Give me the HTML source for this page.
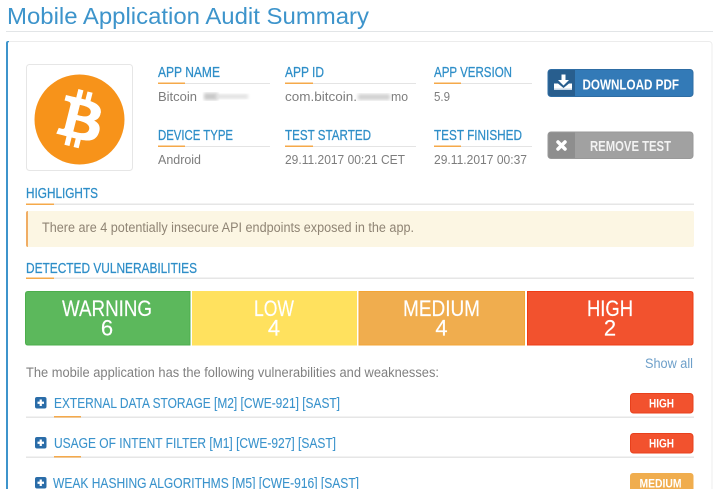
<!DOCTYPE html>
<html><head><meta charset="utf-8"><style>
html,body{margin:0;padding:0;background:#fff;width:720px;height:489px;overflow:hidden}
svg{display:block;filter:blur(.35px)}
text{font-family:"Liberation Sans",sans-serif}
.l{font-size:14.5px;fill:#2e8ec8;stroke:#2e8ec8;stroke-width:.25px}
.v{font-size:13px;fill:#7d7d7d}
.r{font-size:14.5px;fill:#3a93cc;stroke:#3a93cc;stroke-width:.1px}
.c{font-size:22px;fill:#fff;stroke:#fff;stroke-width:.15px}
.bg{font-size:12px;font-weight:bold;fill:#fff}
</style></head><body>
<svg width="720" height="489" viewBox="0 0 720 489" xmlns="http://www.w3.org/2000/svg">
<defs><filter id="b"><feGaussianBlur stdDeviation="1.5"/></filter></defs>
<text x="7" y="24" font-size="23" fill="#3d94cb" textLength="362" lengthAdjust="spacingAndGlyphs">Mobile Application Audit Summary</text>
<rect x="6" y="31" width="707" height="1" fill="#e2e5e7"/>
<rect x="7" y="41.5" width="705" height="470" rx="3" fill="#fff" stroke="#ececec"/>
<path d="M9 41H8Q6 41 6 43V489H8V43Q8 42 9 42Z" fill="#3d94cb"/>

<rect x="26.5" y="64.5" width="106" height="106" rx="3" fill="#fff" stroke="#e6e6e6"/>
<circle cx="79.5" cy="119.5" r="45" fill="#f7931a"/>
<g transform="translate(79.5 119.5) scale(1.41) translate(-31 -32)"><path fill="#fff" fill-rule="evenodd" d="M46.1 27.4c.6-4.4-2.7-6.8-7.3-8.4l1.5-6-3.6-.9-1.5 5.8c-1-.2-1.9-.5-2.9-.7l1.5-5.9-3.6-.9-1.5 6c-.8-.2-1.6-.4-2.3-.5l-5-1.3-1 3.9s2.7.6 2.6.7c1.5.4 1.7 1.3 1.7 2.1l-4.1 16.4c-.2.5-.6 1.2-1.7.9 0 .1-2.6-.7-2.6-.7l-1.8 4.1 4.7 1.2c.9.2 1.7.4 2.6.7l-1.5 6 3.6.9 1.5-6c1 .3 1.9.5 2.9.7l-1.5 6 3.6.9 1.5-6c6.2 1.2 10.8.7 12.8-4.9 1.6-4.5-.1-7.1-3.3-8.8 2.4-.5 4.1-2.1 4.6-5.3zM37.8 39c-1.1 4.5-8.7 2.1-11.2 1.4l2-8c2.5.6 10.4 1.8 9.2 6.6zm1.1-11.7c-1 4.1-7.3 2-9.4 1.5l1.8-7.2c2.1.5 8.7 1.5 7.6 5.7z"/></g>

<text class="l" x="158" y="77" textLength="62" lengthAdjust="spacingAndGlyphs">APP NAME</text>
<rect x="158" y="83" width="112" height="1" fill="#e4e4e4"/><rect x="158" y="82.5" width="27" height="1.5" fill="#f5a94a"/>
<text class="v" x="158" y="101" textLength="39" lengthAdjust="spacingAndGlyphs">Bitcoin</text>
<rect x="204" y="93" width="14" height="7" fill="#c8c8c8" filter="url(#b)"/>
<rect x="216" y="94" width="32" height="5" fill="#e2e2e2" filter="url(#b)"/>

<text class="l" x="285" y="77" textLength="39" lengthAdjust="spacingAndGlyphs">APP ID</text>
<rect x="285" y="83" width="131" height="1" fill="#e4e4e4"/><rect x="285" y="82.5" width="28" height="1.5" fill="#f5a94a"/>
<text class="v" x="285" y="101" textLength="72" lengthAdjust="spacingAndGlyphs">com.bitcoin.</text>
<rect x="358" y="94" width="32" height="6" fill="#d0d0d0" filter="url(#b)"/>
<text class="v" x="391" y="101" textLength="17" lengthAdjust="spacingAndGlyphs">mo</text>

<text class="l" x="434" y="77" textLength="78" lengthAdjust="spacingAndGlyphs">APP VERSION</text>
<rect x="434" y="83" width="98" height="1" fill="#e4e4e4"/><rect x="434" y="82.5" width="27" height="1.5" fill="#f5a94a"/>
<text class="v" x="434" y="101" textLength="16" lengthAdjust="spacingAndGlyphs">5.9</text>

<text class="l" x="158" y="140" textLength="75" lengthAdjust="spacingAndGlyphs">DEVICE TYPE</text>
<rect x="158" y="146" width="112" height="1" fill="#e4e4e4"/><rect x="158" y="145.5" width="27" height="1.5" fill="#f5a94a"/>
<text class="v" x="158" y="164" textLength="43" lengthAdjust="spacingAndGlyphs">Android</text>

<text class="l" x="285" y="140" textLength="86" lengthAdjust="spacingAndGlyphs">TEST STARTED</text>
<rect x="285" y="146" width="131" height="1" fill="#e4e4e4"/><rect x="285" y="145.5" width="28" height="1.5" fill="#f5a94a"/>
<text class="v" x="285" y="164" textLength="120" lengthAdjust="spacingAndGlyphs">29.11.2017 00:21 CET</text>

<text class="l" x="434" y="140" textLength="88" lengthAdjust="spacingAndGlyphs">TEST FINISHED</text>
<rect x="434" y="146" width="98" height="1" fill="#e4e4e4"/><rect x="434" y="145.5" width="27" height="1.5" fill="#f5a94a"/>
<text class="v" x="434" y="164" textLength="93" lengthAdjust="spacingAndGlyphs">29.11.2017 00:37</text>

<rect x="548" y="69.5" width="145" height="27" rx="3" fill="#337ab7" stroke="#2e6da4"/>
<path d="M551 70H575V96H551Q548.5 96 548.5 94V72Q548.5 70 551 70Z" fill="#285e8e"/>
<path d="M561.500 74.500H565.500V80H569L563.500 85.500L558 80H561.500Z" fill="#fff"/>
<path d="M554 83.500H558L563.500 88L569 83.500H572V88.500H554Z" fill="#fff"/>
<rect x="554" y="88.500" width="18" height="1.500" fill="#c6d6e6"/>
<text x="582.5" y="89.500" font-size="15" font-weight="bold" fill="#fff" textLength="96.500" lengthAdjust="spacingAndGlyphs">DOWNLOAD PDF</text>

<rect x="548" y="132" width="145" height="26.500" rx="3" fill="#a1a1a1" stroke="#999"/>
<path d="M551 132.500H575V158H551Q548.5 158 548.5 156V134.500Q548.5 132.500 551 132.500Z" fill="#8e8e8e"/>
<path d="M558 142L565 149M565 142L558 149" stroke="#fff" stroke-width="3.500" stroke-linecap="round"/>
<text x="590" y="151" font-size="15" font-weight="bold" fill="#f2f2f2" textLength="81" lengthAdjust="spacingAndGlyphs">REMOVE TEST</text>

<text class="l" x="26" y="198" textLength="72" lengthAdjust="spacingAndGlyphs">HIGHLIGHTS</text>
<rect x="26" y="203.500" width="668" height="1.500" fill="#e6e6e6"/><rect x="26" y="203.500" width="28" height="1.500" fill="#f5a94a"/>
<rect x="26" y="211" width="668" height="36" rx="2" fill="#fcf6e3"/>
<path d="M28 211Q26 211 26 213V245Q26 247 28 247V211Z" fill="#f0ad64"/>
<text x="42" y="232" font-size="13.500" fill="#8f8474" textLength="372" lengthAdjust="spacingAndGlyphs">There are 4 potentially insecure API endpoints exposed in the app.</text>

<text class="l" x="26" y="273" textLength="171" lengthAdjust="spacingAndGlyphs">DETECTED VULNERABILITIES</text>
<rect x="26" y="277.500" width="668" height="1.500" fill="#e6e6e6"/><rect x="26" y="277.500" width="28" height="1.500" fill="#f5a94a"/>

<path d="M28 291.500H190V345H28Q25.500 345 25.500 342.500V294Q25.500 291.500 28 291.500Z" fill="#5cb85c" stroke="#4cae4c"/>
<rect x="192" y="291" width="165" height="54.500" fill="#ffe15e"/>
<rect x="359" y="291.500" width="165.500" height="53.500" fill="#f0ad4e" stroke="#f3a535"/>
<path d="M527.500 291.500H690.500Q693 291.500 693 294V342.500Q693 345 690.500 345H527.500Z" fill="#f2522e" stroke="#ef3c14"/>
<text class="c" x="107" y="316" text-anchor="middle" textLength="90" lengthAdjust="spacingAndGlyphs">WARNING</text>
<text class="c" x="107" y="335.500" text-anchor="middle">6</text>
<text class="c" x="274" y="316" text-anchor="middle" textLength="40" lengthAdjust="spacingAndGlyphs">LOW</text>
<text class="c" x="274" y="335.500" text-anchor="middle">4</text>
<text class="c" x="441.500" y="316" text-anchor="middle" textLength="77" lengthAdjust="spacingAndGlyphs">MEDIUM</text>
<text class="c" x="441.500" y="335.500" text-anchor="middle">4</text>
<text class="c" x="610" y="316" text-anchor="middle" textLength="46" lengthAdjust="spacingAndGlyphs">HIGH</text>
<text class="c" x="610" y="335.500" text-anchor="middle">2</text>

<text x="26" y="377" font-size="13.500" fill="#808080" textLength="413" lengthAdjust="spacingAndGlyphs">The mobile application has the following vulnerabilities and weaknesses:</text>
<text x="645" y="368" font-size="13.500" fill="#6d9fc9" textLength="48" lengthAdjust="spacingAndGlyphs">Show all</text>

<g>
<rect x="35" y="397" width="11.500" height="11.500" rx="2" fill="#2a6ca8"/><path d="M37.500 402.750H44M40.750 399.500V406" stroke="#fff" stroke-width="2.200"/>
<text class="r" x="54" y="408" textLength="286" lengthAdjust="spacingAndGlyphs">EXTERNAL DATA STORAGE [M2] [CWE-921] [SAST]</text>
<rect x="26" y="416.500" width="668" height="1.500" fill="#e6e6e6"/><rect x="54" y="416" width="27" height="1.500" fill="#f5a94a"/>
<rect x="630.500" y="393.500" width="62.500" height="19.500" rx="3" fill="#f2522e" stroke="#e8401c"/>
<text class="bg" x="661.500" y="407.500" text-anchor="middle" textLength="25" lengthAdjust="spacingAndGlyphs">HIGH</text>
</g>
<g>
<rect x="35" y="437" width="11.500" height="11.500" rx="2" fill="#2a6ca8"/><path d="M37.500 442.750H44M40.750 439.500V446" stroke="#fff" stroke-width="2.200"/>
<text class="r" x="54" y="448" textLength="282" lengthAdjust="spacingAndGlyphs">USAGE OF INTENT FILTER [M1] [CWE-927] [SAST]</text>
<rect x="26" y="456.500" width="668" height="1.500" fill="#e6e6e6"/><rect x="54" y="456" width="27" height="1.500" fill="#f5a94a"/>
<rect x="630.500" y="433.500" width="62.500" height="19.500" rx="3" fill="#f2522e" stroke="#e8401c"/>
<text class="bg" x="661.500" y="447.500" text-anchor="middle" textLength="25" lengthAdjust="spacingAndGlyphs">HIGH</text>
</g>
<g>
<rect x="35" y="477" width="11.500" height="11.500" rx="2" fill="#2a6ca8"/><path d="M37.500 482.750H44M40.750 479.500V486" stroke="#fff" stroke-width="2.200"/>
<text class="r" x="53" y="488" textLength="306" lengthAdjust="spacingAndGlyphs">WEAK HASHING ALGORITHMS [M5] [CWE-916] [SAST]</text>
<rect x="630" y="473" width="63.500" height="22" rx="3" fill="#f0ad4e"/>
<text class="bg" x="660.500" y="487.500" text-anchor="middle" textLength="42" lengthAdjust="spacingAndGlyphs">MEDIUM</text>
</g>
</svg>
</body></html>
